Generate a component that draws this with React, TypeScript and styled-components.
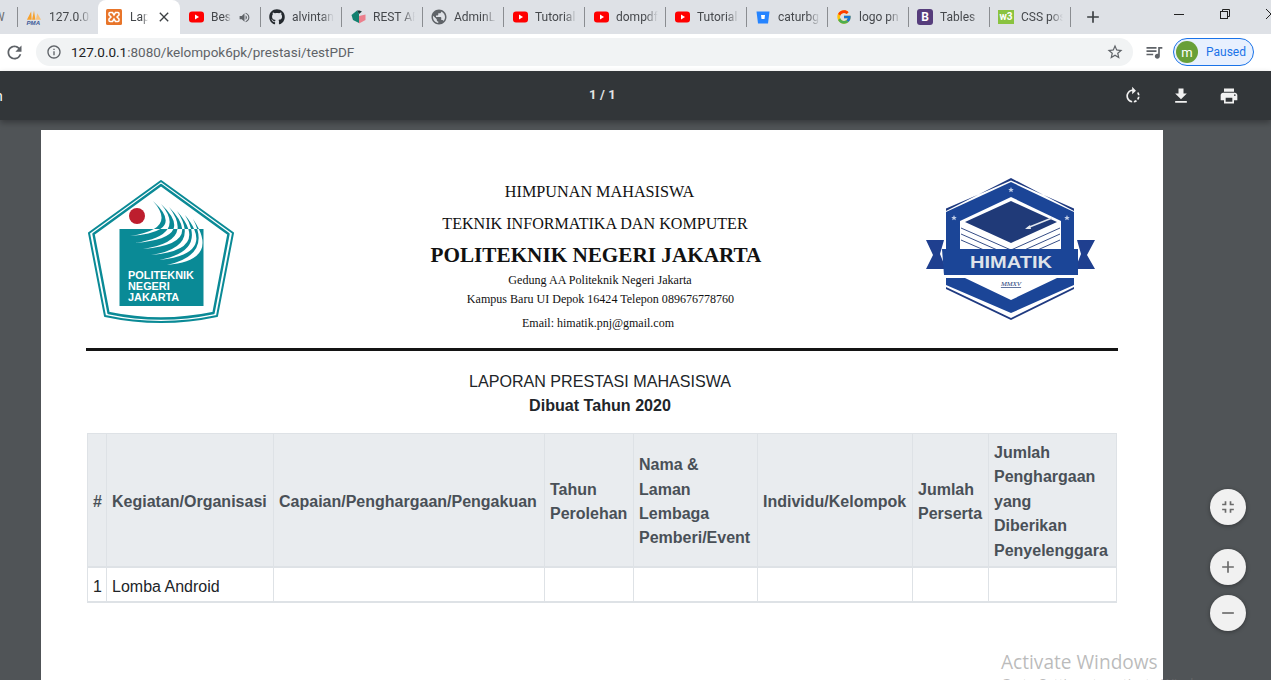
import React, { FC } from "react";
import styled, { createGlobalStyle } from "styled-components";
import { FaGithub } from "react-icons/fa";
import { FcGoogle } from "react-icons/fc";
import {
  MdAdd,
  MdClose,
  MdFileDownload,
  MdFullscreenExit,
  MdInfoOutline,
  MdPrint,
  MdPublic,
  MdQueueMusic,
  MdRefresh,
  MdRemove,
  MdRotateRight,
  MdStarBorder,
  MdVolumeUp,
} from "react-icons/md";

const GlobalStyle = createGlobalStyle`
  html, body {
    margin: 0;
    height: 100%;
    overflow: hidden;
  }
  #root {
    height: 100%;
  }
`;

const Shell = styled.div`
  position: relative;
  display: flex;
  flex-direction: column;
  height: 680px;
  overflow: hidden;
  font-family: Roboto, "Liberation Sans", sans-serif;
`;

/* browser chrome */
const TabStrip = styled.div`
  display: flex;
  align-items: center;
  flex: none;
  height: 34px;
  background: #dee1e6;
  overflow: hidden;
`;

const Tab = styled.div<{ $active?: boolean; $width?: number }>`
  position: relative;
  display: flex;
  align-items: center;
  flex: none;
  box-sizing: border-box;
  width: ${(props) => props.$width ?? 80}px;
  height: 34px;
  padding: 0 7px 0 8px;
  gap: ${(props) => (props.$active ? 8 : 7)}px;
  background: ${(props) => (props.$active ? "#fff" : "transparent")};
  border-radius: ${(props) => (props.$active ? "8px 8px 0 0" : "0")};
  color: #45484c;
  font-size: 12px;
`;

const CutTab = styled.div`
  display: flex;
  align-items: center;
  flex: none;
  width: 17px;
  height: 34px;
  overflow: hidden;
  color: #6b6e72;
  font-size: 12px;
`;

const CutTabTitle = styled.span`
  margin-left: -6px;
  white-space: nowrap;
`;

const TabTitle = styled.span`
  flex: 1;
  min-width: 0;
  overflow: hidden;
  white-space: nowrap;
  -webkit-mask-image: linear-gradient(90deg, #000 70%, transparent 100%);
  mask-image: linear-gradient(90deg, #000 70%, transparent 100%);
`;

const Favicon = styled.span`
  display: flex;
  align-items: center;
  justify-content: center;
  flex: none;
  width: 16px;
  height: 16px;
  font-size: 16px;
`;

const TabSep = styled.span`
  flex: none;
  width: 1px;
  height: 20px;
  background: #8a8d91;
`;

const NewTab = styled.span`
  display: flex;
  margin-left: 12px;
  color: #3c4043;
  font-size: 20px;
`;

const WindowControls = styled.div`
  display: flex;
  align-items: center;
  gap: 36px;
  margin-left: auto;
  margin-right: -5px;
  padding-bottom: 6px;
  color: #222;
`;

const AddressBar = styled.div`
  display: flex;
  align-items: center;
  flex: none;
  box-sizing: border-box;
  height: 37px;
  padding: 0 17px 1px 0;
  background: #fff;
`;

const ReloadSlot = styled.span`
  display: flex;
  justify-content: center;
  width: 28px;
  margin-right: 8px;
  color: #5f6368;
  font-size: 21px;
`;

const Omnibox = styled.div`
  display: flex;
  align-items: center;
  flex: 1;
  height: 28px;
  padding: 0 9px 0 10px;
  border-radius: 14px;
  background: #f1f3f4;
  color: #5f6368;
  font-size: 13.5px;
`;

const UrlText = styled.span`
  flex: 1;
  margin-left: 9px;
  white-space: nowrap;

  b {
    color: #202124;
    font-weight: 400;
  }
`;

const BarIcon = styled.span<{ $size?: number }>`
  display: flex;
  color: #5f6368;
  font-size: ${(props) => props.$size ?? 16}px;
`;

const MediaSlot = styled(BarIcon)`
  margin: 0 9px 0 11px;
`;

const ProfilePill = styled.div`
  display: flex;
  align-items: center;
  box-sizing: border-box;
  width: 81px;
  height: 28px;
  padding: 0 2px;
  gap: 8px;
  border: 1px solid #1a73e8;
  border-radius: 14px;
  background: #e8f0fe;
  color: #1a73e8;
  font-size: 12px;
`;

const Avatar = styled.span`
  display: flex;
  align-items: center;
  justify-content: center;
  width: 22px;
  height: 22px;
  border-radius: 50%;
  background: #689f38;
  color: #fff;
  font-size: 13px;
`;

/* pdf viewer */
const PdfToolbar = styled.div`
  position: relative;
  z-index: 2;
  display: grid;
  grid-template-columns: 589px auto 1fr;
  align-items: center;
  flex: none;
  height: 49px;
  padding: 0 32px 0 0;
  background: #323639;
  box-shadow: 0 3px 6px rgba(0, 0, 0, 0.3);
  color: #fff;
`;

const CutTitle = styled.span`
  margin-left: -5px;
  font-size: 14px;
`;

const PageCount = styled.span`
  padding-bottom: 2px;
  font-size: 13px;
  font-weight: 700;
  letter-spacing: 0.1px;
  color: #e4e4e4;
`;

const ToolIcons = styled.div`
  display: flex;
  justify-content: flex-end;
  gap: 28px;
  font-size: 20px;
  color: #f1f1f1;
`;

const ViewerBody = styled.div`
  position: relative;
  flex: 1;
  min-height: 0;
  padding: 10px 108px 0 41px;
  background: #505457;
  overflow: hidden;
`;

const Sheet = styled.div`
  box-sizing: border-box;
  width: 1122px;
  height: 900px;
  padding: 48px 46px 0;
  background: #fff;
`;

const LetterHead = styled.header`
  display: grid;
  grid-template-columns: 184px 1fr 192px;
  height: 162px;
`;

const HeadCenter = styled.div`
  text-align: center;
  font-family: "Liberation Serif", serif;
  color: #111;
`;

const HeadLine = styled.div<{ $size: number; $lh: number; $bold?: boolean; $left?: number; $right?: number }>`
  padding-left: ${(props) => props.$left ?? 0}px;
  padding-right: ${(props) => props.$right ?? 0}px;
  font-size: ${(props) => props.$size}px;
  line-height: ${(props) => props.$lh}px;
  font-weight: ${(props) => (props.$bold ? 700 : 400)};
`;

const Rule = styled.hr`
  margin: 8px -1px 0;
  border: 0;
  height: 3px;
  background: #141414;
`;

const ReportTitle = styled.div`
  margin-top: 18px;
  padding-right: 4px;
  text-align: center;
  font-family: "Liberation Sans", sans-serif;
  font-size: 16.1px;
  line-height: 24px;
  color: #212529;

  strong {
    display: block;
  }
`;

const Table = styled.table`
  margin-top: 16px;
  width: 1029px;
  table-layout: fixed;
  border-collapse: collapse;
  font-family: "Liberation Sans", sans-serif;
  font-size: 16px;
  line-height: 24.4px;
  color: #212529;
  border-bottom: 2px solid #dee2e6;
`;

const Th = styled.th<{ $w: number }>`
  width: ${(props) => props.$w}px;
  box-sizing: border-box;
  padding: 7px 5px 3px;
  text-align: left;
  vertical-align: middle;
  background: #e9ecef;
  color: #495057;
  border: 1px solid #dee2e6;
  border-bottom-width: 2px;
  white-space: nowrap;
`;

const Td = styled.td`
  padding: 6.5px 5px 2px;
  border: 1px solid #dee2e6;
  border-bottom: 0;
  white-space: nowrap;
`;

const Fab = styled.button`
  display: flex;
  align-items: center;
  justify-content: center;
  width: 36px;
  height: 36px;
  padding: 0;
  border: 0;
  border-radius: 50%;
  background: #f1f1f1;
  color: #6b6b6b;
  font-size: 20px;
  box-shadow: 0 1px 4px rgba(0, 0, 0, 0.35);
`;

const FabStack = styled.div`
  position: absolute;
  left: 1210px;
  top: 369px;
  display: flex;
  flex-direction: column;
`;

const FabGap = styled.div<{ $h: number }>`
  height: ${(props) => props.$h}px;
`;

const ActivateNote = styled.div`
  position: absolute;
  left: 1001px;
  top: 648px;
  color: rgba(120, 120, 120, 0.5);
  font-family: "Open Sans", sans-serif;
  font-size: 19.1px;
  line-height: 28px;
  white-space: nowrap;

  small {
    display: block;
    font-size: 13.5px;
    line-height: 20px;
    margin-top: -3px;
  }
`;

/* favicons */
const YouTubeIcon: FC = () => (
  <svg width="15" height="12" viewBox="0 0 15 12">
    <rect width="15" height="11" y="0.5" rx="3" fill="#f00" />
    <path d="M6 3.5 10 6 6 8.5Z" fill="#fff" />
  </svg>
);

const PmaIcon: FC = () => (
  <svg width="17" height="17" viewBox="0 0 17 17">
    <path d="M1 11 5.5 2 6 11Z M6.5 11 8.5 1 10 11Z" fill="#f7a12c" />
    <path d="M10.5 11 12 4 16 11Z" fill="#f9c27a" />
    <text x="0.5" y="16.5" fontSize="6.5" fontWeight="700" fontStyle="italic" fill="#3b5a98" fontFamily="Liberation Sans">PMA</text>
  </svg>
);

const XamppIcon: FC = () => (
  <svg width="16" height="16" viewBox="0 0 16 16">
    <rect width="16" height="16" rx="1.5" fill="#e8752a" />
    <path d="M4 3.5h2.5L8 6l1.5-2.5H12a1 1 0 0 1 1 1V6l-2 2 2 2v1.5a1 1 0 0 1-1 1H9.5L8 10l-1.5 2.5H4a1 1 0 0 1-1-1V10l2-2-2-2V4.500a1 1 0 0 1 1-1Z" fill="none" stroke="#fff" strokeWidth="1.5" />
  </svg>
);

const RestIcon: FC = () => (
  <svg width="15" height="16" viewBox="0 0 15 16">
    <path d="M0.5 6 6 1.5 8 5v9L2 11Z" fill="#12806f" />
    <path d="M8 5 11 2.5 8.500 1.500 6 1.500Z" fill="#1c3b3a" />
    <path d="M8 7 14.500 5.500V11L8 14.500Z" fill="#ec7f8c" />
  </svg>
);

const BitbucketIcon: FC = () => (
  <svg width="14" height="13" viewBox="0 0 14 13">
    <path d="M0.5 0.5h13L12 12.500H2Z" fill="#2684ff" />
    <path d="M5 4h4l-.5 4h-3Z" fill="#fff" />
  </svg>
);

const BootstrapIcon = styled.span`
  display: flex;
  align-items: center;
  justify-content: center;
  width: 16px;
  height: 16px;
  border-radius: 3px;
  background: #563d7c;
  color: #fff;
  font-size: 12px;
  font-weight: 700;
`;

const W3Icon = styled.span`
  display: flex;
  align-items: center;
  justify-content: center;
  width: 16px;
  height: 14px;
  background: #8ac340;
  color: #fff;
  font-size: 10px;
  font-weight: 700;
  line-height: 1;
`;

const GreyGlyph = styled.span`
  display: flex;
  color: #5f6368;
  font-size: 18px;
`;

const CloseGlyph = styled.span`
  display: flex;
  color: #3c4043;
  font-size: 16px;
  margin-right: 1px;
`;

const SpeakerGlyph = styled.span`
  display: flex;
  color: #5f6368;
  font-size: 13px;
  margin-right: 2px;
`;

/* logos */
const crescents = [
  "M78 31Q112 62 55 66Q103 59 78 31Z",
  "M86 34Q122 68 60 73Q112 65 86 34Z",
  "M94 37Q130 74 68 79Q120 71 94 37Z",
  "M102 41Q136 80 76 85Q126 77 102 41Z",
  "M110 45Q142 84 84 90Q132 81 110 45Z",
  "M118 49Q146 90 92 95Q137 85 118 49Z",
];

const PnjLogo: FC = () => (
  <svg width="150" height="146" viewBox="12 8 150 146">
    <defs>
      <clipPath id="aboveBox">
        <rect x="0" y="0" width="175" height="59" />
      </clipPath>
      <clipPath id="insideBox">
        <rect x="44" y="59" width="84" height="77" />
      </clipPath>
    </defs>
    <g fill="none" stroke="#0a8a96" strokeLinejoin="round">
      <path d="M86 11 158 63 142 146Q86 158 30 146L14 63Z" strokeWidth="2" />
      <path d="M86 15 153.500 64 138.500 143Q86 154 33.500 143L18.500 64Z" strokeWidth="2.400" />
    </g>
    <rect x="44.500" y="59" width="84" height="77" fill="#0a8a96" />
    <circle cx="62" cy="46" r="8" fill="#bd1e2e" />
    <g clipPath="url(#aboveBox)" fill="#0a8a96">
      {crescents.map((d) => (
        <path key={d} d={d} />
      ))}
    </g>
    <g clipPath="url(#insideBox)" fill="#fff">
      {crescents.map((d) => (
        <path key={d} d={d} />
      ))}
    </g>
    <g fill="#fff" fontFamily="Liberation Sans" fontWeight="700" fontSize="10.900">
      <text x="53" y="109">POLITEKNIK</text>
      <text x="53" y="120">NEGERI</text>
      <text x="53" y="131">JAKARTA</text>
    </g>
  </svg>
);

const HimatikLogo: FC = () => (
  <svg width="172" height="142" viewBox="10 8 172 142">
    <path d="M11 70H29L25 84 31 99H11L18 85Z" fill="#1f3f8f" />
    <path d="M180 70H162L166 84 160 99H180L172 85Z" fill="#1f3f8f" />
    <path d="M31 41 96 8 159 41V38.500L96 10.500 31 38.500Z" fill="#1f3a80" />
    <path d="M31 42 96 12 159 42V80H31Z" fill="#1b4597" />
    <path d="M45 51 96 27 146 51V79H45Z" fill="#fff" />
    <path d="M50 52 96 31 142 52 96 73Z" fill="#203a78" />
    <path d="M46 58 96 80 145 58M46 64 96 86 145 64M46 70 92 90M145 70 100 90" fill="none" stroke="#203a78" strokeWidth="0.900" />
    <path d="M137 48 112 58" stroke="#e4e8ee" strokeWidth="1.400" />
    <path d="M115 55 110 59 116 59Z" fill="#e4e8ee" />
    <path d="M96 17l.8 1.900 2 .1-1.500 1.300.5 2-1.800-1.100-1.800 1.100.5-2-1.500-1.300 2-.1ZM39 45l.8 1.900 2 .1-1.500 1.300.5 2-1.800-1.100-1.800 1.100.5-2-1.500-1.300 2-.1ZM152 45l.8 1.900 2 .1-1.500 1.300.5 2-1.800-1.100-1.800 1.100.5-2-1.500-1.300 2-.1Z" fill="#c2cee6" />
    <path d="M27 79H163L163 105H29Z" fill="#1b4597" />
    <text x="55" y="98" fontFamily="Liberation Sans" fontWeight="700" fontSize="17" fill="#dfe3ea" textLength="82" lengthAdjust="spacingAndGlyphs">HIMATIK</text>
    <path d="M31 108H50L96 130 142 108H159V115L96 143 31 115Z" fill="#1b4597" />
    <path d="M31 117 96 148 159 117V119L96 150 31 119Z" fill="#1f3a80" />
    <text x="96" y="116" textAnchor="middle" fontFamily="Liberation Serif" fontStyle="italic" fontSize="7" fill="#203a78" textDecoration="underline">MMXV</text>
  </svg>
);

const WindowMinimize: FC = () => (
  <svg width="10" height="10" viewBox="0 0 10 10">
    <path d="M0 5.500H10" stroke="currentColor" />
  </svg>
);

const WindowRestore: FC = () => (
  <svg width="10" height="10" viewBox="0 0 10 10" fill="none" stroke="currentColor">
    <rect x="0.500" y="2.500" width="7" height="7" />
    <path d="M2.500 2.500V0.500H9.500V7.500H7.500" />
  </svg>
);

const WindowClose: FC = () => (
  <svg width="10" height="10" viewBox="0 0 10 10" stroke="currentColor">
    <path d="M0 0 10 10M10 0 0 10" />
  </svg>
);

type TabEntry = { icon: React.ReactNode; title: string; extra?: React.ReactNode };

const trailingTabs: TabEntry[] = [
  { icon: <YouTubeIcon />, title: "Best", extra: <SpeakerGlyph><MdVolumeUp /></SpeakerGlyph> },
  { icon: <FaGithub color="#24292e" />, title: "alvintan" },
  { icon: <RestIcon />, title: "REST AF" },
  { icon: <GreyGlyph><MdPublic /></GreyGlyph>, title: "AdminL" },
  { icon: <YouTubeIcon />, title: "Tutorial" },
  { icon: <YouTubeIcon />, title: "dompdf" },
  { icon: <YouTubeIcon />, title: "Tutorial" },
  { icon: <BitbucketIcon />, title: "caturbg" },
  { icon: <FcGoogle />, title: "logo pn" },
  { icon: <BootstrapIcon>B</BootstrapIcon>, title: "Tables" },
  { icon: <W3Icon>w3</W3Icon>, title: "CSS pos" },
];

const columns: { width: number; lines: string[] }[] = [
  { width: 19, lines: ["#"] },
  { width: 167, lines: ["Kegiatan/Organisasi"] },
  { width: 271, lines: ["Capaian/Penghargaan/Pengakuan"] },
  { width: 89, lines: ["Tahun", "Perolehan"] },
  { width: 124, lines: ["Nama &", "Laman", "Lembaga", "Pemberi/Event"] },
  { width: 155, lines: ["Individu/Kelompok"] },
  { width: 76, lines: ["Jumlah", "Perserta"] },
  { width: 128, lines: ["Jumlah", "Penghargaan", "yang", "Diberikan", "Penyelenggara"] },
];

const rowCells = ["1", "Lomba Android", "", "", "", "", "", ""];

const App: FC = () => (
  <Shell>
    <GlobalStyle />
    <TabStrip>
      <CutTab>
        <CutTabTitle>W</CutTabTitle>
      </CutTab>
      <TabSep />
      <Tab>
        <Favicon>
          <PmaIcon />
        </Favicon>
        <TabTitle>127.0.0.1</TabTitle>
      </Tab>
      <Tab $active $width={82}>
        <Favicon>
          <XamppIcon />
        </Favicon>
        <TabTitle>Lapora</TabTitle>
        <CloseGlyph>
          <MdClose />
        </CloseGlyph>
      </Tab>
      {trailingTabs.map((tab, index) => (
        <React.Fragment key={tab.title + index}>
          <Tab>
            <Favicon>{tab.icon}</Favicon>
            <TabTitle>{tab.title}</TabTitle>
            {tab.extra}
          </Tab>
          <TabSep />
        </React.Fragment>
      ))}
      <NewTab>
        <MdAdd />
      </NewTab>
      <WindowControls>
        <WindowMinimize />
        <WindowRestore />
        <WindowClose />
      </WindowControls>
    </TabStrip>

    <AddressBar>
      <ReloadSlot>
        <MdRefresh />
      </ReloadSlot>
      <Omnibox>
        <BarIcon $size={16}>
          <MdInfoOutline />
        </BarIcon>
        <UrlText>
          <b>127.0.0.1</b>:8080/kelompok6pk/prestasi/testPDF
        </UrlText>
        <BarIcon $size={18}>
          <MdStarBorder />
        </BarIcon>
      </Omnibox>
      <MediaSlot $size={20}>
        <MdQueueMusic />
      </MediaSlot>
      <ProfilePill>
        <Avatar>m</Avatar>
        Paused
      </ProfilePill>
    </AddressBar>

    <PdfToolbar>
      <CutTitle>n</CutTitle>
      <PageCount>1 / 1</PageCount>
      <ToolIcons>
        <MdRotateRight />
        <MdFileDownload />
        <MdPrint />
      </ToolIcons>
    </PdfToolbar>

    <ViewerBody>
      <Sheet>
        <LetterHead>
          <PnjLogo />
          <HeadCenter>
            <HeadLine $size={16.2} $lh={28} $left={3}>HIMPUNAN MAHASISWA</HeadLine>
            <HeadLine $size={16.1} $lh={36} $right={6}>TEKNIK INFORMATIKA DAN KOMPUTER</HeadLine>
            <HeadLine $size={21.2} $lh={26} $bold $right={4}>POLITEKNIK NEGERI JAKARTA</HeadLine>
            <HeadLine $size={12.1} $lh={24} $left={4}>Gedung AA Politeknik Negeri Jakarta</HeadLine>
            <HeadLine $size={12.05} $lh={14} $left={5}>Kampus Baru UI Depok 16424 Telepon 089676778760</HeadLine>
            <HeadLine $size={12} $lh={34}>Email: himatik.pnj@gmail.com</HeadLine>
          </HeadCenter>
          <HimatikLogo />
        </LetterHead>
        <Rule />
        <ReportTitle>
          LAPORAN PRESTASI MAHASISWA
          <strong>Dibuat Tahun 2020</strong>
        </ReportTitle>
        <Table>
          <thead>
            <tr>
              {columns.map((column) => (
                <Th key={column.lines.join()} $w={column.width}>
                  {column.lines.map((line, index) => (
                    <React.Fragment key={line}>
                      {index > 0 && <br />}
                      {line}
                    </React.Fragment>
                  ))}
                </Th>
              ))}
            </tr>
          </thead>
          <tbody>
            <tr>
              {rowCells.map((cell, index) => (
                <Td key={index}>{cell}</Td>
              ))}
            </tr>
          </tbody>
        </Table>
      </Sheet>
      <FabStack>
        <Fab>
          <MdFullscreenExit />
        </Fab>
        <FabGap $h={24} />
        <Fab>
          <MdAdd />
        </Fab>
        <FabGap $h={10} />
        <Fab>
          <MdRemove />
        </Fab>
      </FabStack>
    </ViewerBody>

    <ActivateNote>
      Activate Windows
      <small>Go to Settings to activate Windows.</small>
    </ActivateNote>
  </Shell>
);

export default App;
